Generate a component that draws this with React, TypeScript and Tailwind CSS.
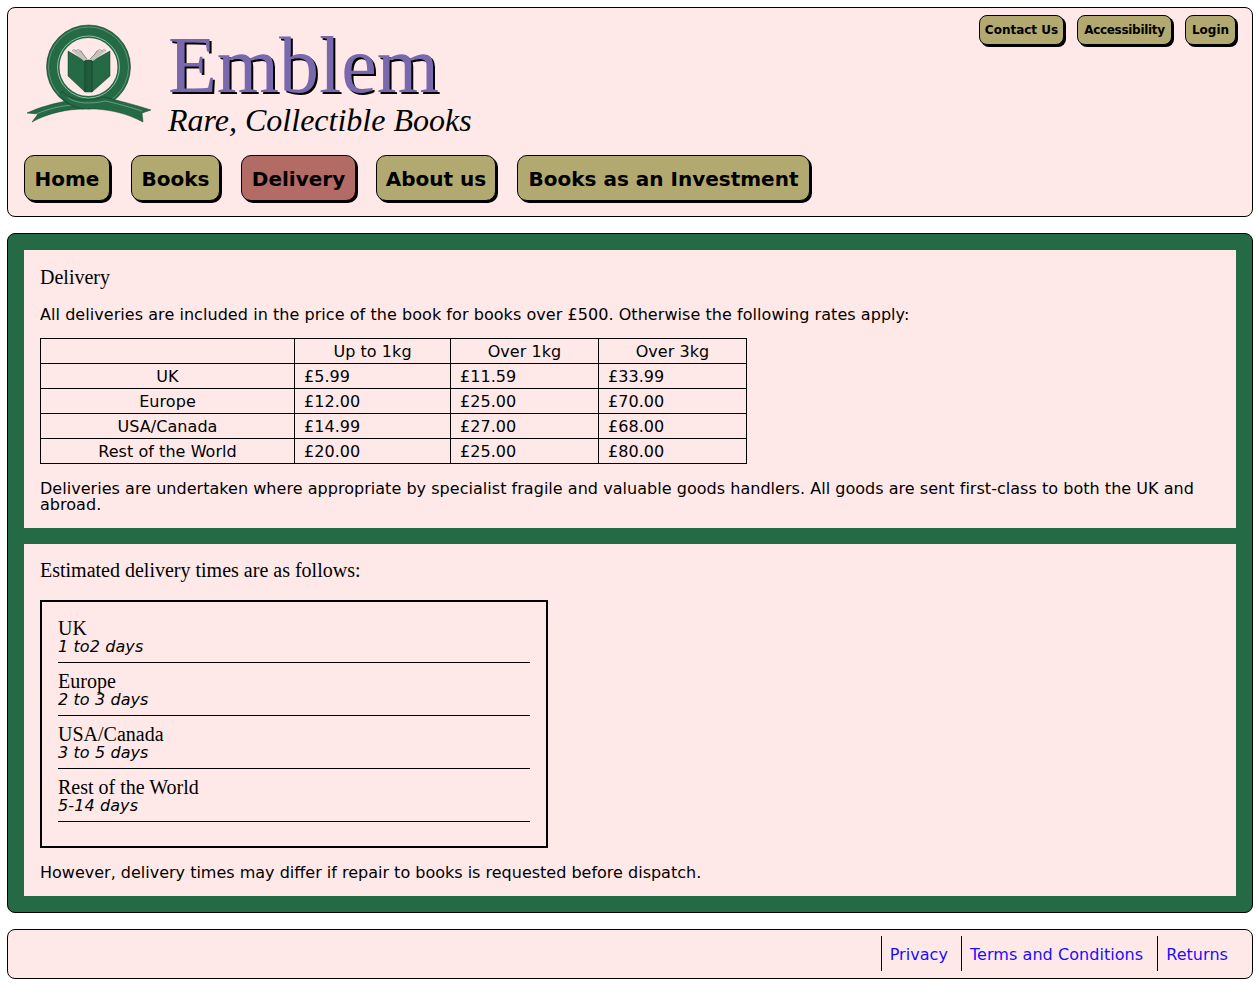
const sans = "font-['DejaVu_Sans',sans-serif] tracking-[0.055px]";

function Logo() {
  return (
    <svg viewBox="24 20 130 105" className="w-[130px] h-[105px] block">
      {/* left tail */}
      <path d="M27 112 C40 106 52 103 66 100 L84 108 C68 108 48 112 32 121 L38 113 Z" fill="#246a44" stroke="#123d27" strokeWidth="0.5" />
      <path d="M36 113 C48 108 60 105 72 104" fill="none" stroke="#d8e4da" strokeWidth="0.4" />
      {/* ring */}
      <circle cx="88.5" cy="66" r="35.5" fill="none" stroke="#246a44" strokeWidth="13" />
      <circle cx="88.5" cy="66" r="42" fill="none" stroke="#123d27" strokeWidth="0.5" />
      <circle cx="88.5" cy="66" r="40" fill="none" stroke="#cfe0d4" strokeWidth="0.35" />
      <circle cx="88.5" cy="66" r="31" fill="none" stroke="#e6eee8" strokeWidth="0.6" />
      {/* right tail sweeping out of the ring */}
      <path d="M62 90 C72 100 84 101 104 96 C120 100 136 104 151 109 L142 112 L143 121 C126 112 106 107 84 108 C74 107 66 102 60 94 Z" fill="#246a44" stroke="#123d27" strokeWidth="0.5" />
      <path d="M68 97 C78 103 90 103 106 100 C118 103 130 106 142 110" fill="none" stroke="#d8e4da" strokeWidth="0.4" />
      {/* book */}
      <path d="M68 50 L85 60 L85 91 L68 75 Z" fill="#246a44" stroke="#123d27" strokeWidth="0.5" />
      <path d="M110 50 L92 60 L92 91 L110 75 Z" fill="#246a44" stroke="#123d27" strokeWidth="0.5" />
      <rect x="85" y="59" width="7" height="32" fill="#1f5c3b" stroke="#123d27" strokeWidth="0.5" />
      <path d="M72 50 L81 50 L87 58 L84 60 Z" fill="#c4c4ba" />
      <path d="M106 50 L97 50 L90 58 L93 60 Z" fill="#c4c4ba" />
      <path d="M72 50 L74 48.5 L76 50 L78 48.5 L81 50 L83 53 L87 58" fill="none" stroke="#444" strokeWidth="0.5" />
      <path d="M106 50 L104 48.5 L102 50 L100 48.5 L97 50 L95 53 L90 58" fill="none" stroke="#444" strokeWidth="0.5" />
    </svg>
  );
}

function NavButton({ label, active, className }: { label: string; active?: boolean; className: string }) {
  return (
    <a
      className={`block border border-black rounded-[10px] shadow-[2px_2px_0_#000] text-center pt-[10px] pb-[8px] text-[20px] leading-[26px] font-bold text-black tracking-normal whitespace-nowrap ${
        active ? "bg-[#b36b65]" : "bg-[#b1a96f]"
      } ${className}`}
    >
      {label}
    </a>
  );
}

function SmallButton({ label, className }: { label: string; className: string }) {
  return (
    <a className={`block bg-[#b1a96f] border border-black rounded-lg shadow-[2px_2px_0_#000] text-center py-[5px] text-[12px] leading-[18px] font-bold text-black whitespace-nowrap ${className}`}>
      {label}
    </a>
  );
}

const rates = [
  ["UK", "£5.99", "£11.59", "£33.99"],
  ["Europe", "£12.00", "£25.00", "£70.00"],
  ["USA/Canada", "£14.99", "£27.00", "£68.00"],
  ["Rest of the World", "£20.00", "£25.00", "£80.00"],
];

const times = [
  ["UK", "1 to2 days"],
  ["Europe", "2 to 3 days"],
  ["USA/Canada", "3 to 5 days"],
  ["Rest of the World", "5-14 days"],
];

export default function App() {
  return (
    <div className={`${sans} bg-white text-black pl-[7px] pt-[7px] w-[1257px] h-[985px] overflow-hidden`}>
      <div className="w-[1246px]">
        {/* Header */}
        <header className="bg-[#ffe9e8] border border-black rounded-lg h-[210px] px-4 pt-[13px] relative">
          <div className="flex h-[130px]">
            <Logo />
            <div className="ml-[14px] tracking-normal">
              <div className="font-['Liberation_Serif',serif] text-[80px] leading-[70px] text-[#7a68ae] [text-shadow:2px_2px_0_#000] mt-[9px]">
                Emblem
              </div>
              <div className="font-['Liberation_Serif',serif] italic text-[32px] leading-[36px] mt-[2px]">
                Rare, Collectible Books
              </div>
            </div>
          </div>
          <nav className="flex mt-[4px]">
            <NavButton label="Home" className="w-[86px] mr-[21px]" />
            <NavButton label="Books" className="w-[89px] mr-[21px]" />
            <NavButton label="Delivery" active className="w-[115px] mr-[20px]" />
            <NavButton label="About us" className="w-[120px] mr-[21px]" />
            <NavButton label="Books as an Investment" className="w-[293px]" />
          </nav>
          <div className="absolute top-[7px] right-[16px] flex gap-[13px]">
            <SmallButton label="Contact Us" className="w-[85px] tracking-normal" />
            <SmallButton label="Accessibility" className="w-[95px] tracking-[-0.3px]" />
            <SmallButton label="Login" className="w-[51px] tracking-normal" />
          </div>
        </header>

        {/* Main */}
        <main className="mt-4 bg-[#246a44] border border-black rounded-lg p-4 flex flex-col gap-4 h-[680px]">
          <section className="bg-[#ffe9e8] h-[278px] px-4 pt-4">
            <h1 className="font-['Liberation_Serif',serif] tracking-normal text-[20px] leading-[23px] font-normal">Delivery</h1>
            <p className="text-[16px] leading-[18px] mt-[17px]">
              All deliveries are included in the price of the book for books over £500. Otherwise the following rates apply:
            </p>
            <table className="mt-[14px] border-collapse text-[16px] leading-[18px] w-[707px] table-fixed">
              <colgroup>
                <col className="w-[254px]" />
                <col className="w-[156px]" />
                <col className="w-[148px]" />
                <col className="w-[148px]" />
              </colgroup>
              <tbody>
                <tr className="h-[25px]">
                  <td className="border border-black p-0"></td>
                  <td className="border border-black p-0 pt-[2px] text-center">Up to 1kg</td>
                  <td className="border border-black p-0 pt-[2px] text-center">Over 1kg</td>
                  <td className="border border-black p-0 pt-[2px] text-center">Over 3kg</td>
                </tr>
                {rates.map((row) => (
                  <tr key={row[0]} className="h-[25px]">
                    <td className="border border-black p-0 pt-[2px] text-center">{row[0]}</td>
                    <td className="border border-black p-0 pt-[2px] pl-[9px]">{row[1]}</td>
                    <td className="border border-black p-0 pt-[2px] pl-[9px]">{row[2]}</td>
                    <td className="border border-black p-0 pt-[2px] pl-[9px]">{row[3]}</td>
                  </tr>
                ))}
              </tbody>
            </table>
            <p className="text-[16px] leading-[16px] mt-[17px] tracking-[0.035px]">
              Deliveries are undertaken where appropriate by specialist fragile and valuable goods handlers. All goods are sent first-class to both the UK and abroad.
            </p>
          </section>
          <section className="bg-[#ffe9e8] flex-1 px-4 pt-[15px]">
            <p className="font-['Liberation_Serif',serif] tracking-normal text-[20px] leading-[23px]">Estimated delivery times are as follows:</p>
            <div className="mt-[18px] w-[508px] h-[248px] border-2 border-black px-4 pt-[8px]">
              {times.map(([place, days]) => (
                <div key={place} className="border-b border-black pt-[9px] h-[53px]">
                  <div className="font-['Liberation_Serif',serif] tracking-normal text-[20px] leading-[19px]">{place}</div>
                  <div className="italic text-[16px] leading-[17px] tracking-[0.1px]">{days}</div>
                </div>
              ))}
            </div>
            <p className="text-[16px] leading-[18px] mt-[16px] tracking-normal">
              However, delivery times may differ if repair to books is requested before dispatch.
            </p>
          </section>
        </main>

        {/* Footer */}
        <footer className="mt-4 bg-[#ffe9e8] border border-black rounded-lg h-[50px] flex justify-end items-start pt-[6px] pr-[16px] text-[16px] leading-[32px] text-[#1a0dff]">
          <a className="border-l border-black pt-[3px] pl-2 pr-[13px]">Privacy</a>
          <a className="border-l border-black pt-[3px] pl-2 pr-[14px]">Terms and Conditions</a>
          <a className="border-l border-black pt-[3px] pl-2 pr-2">Returns</a>
        </footer>
      </div>
    </div>
  );
}
